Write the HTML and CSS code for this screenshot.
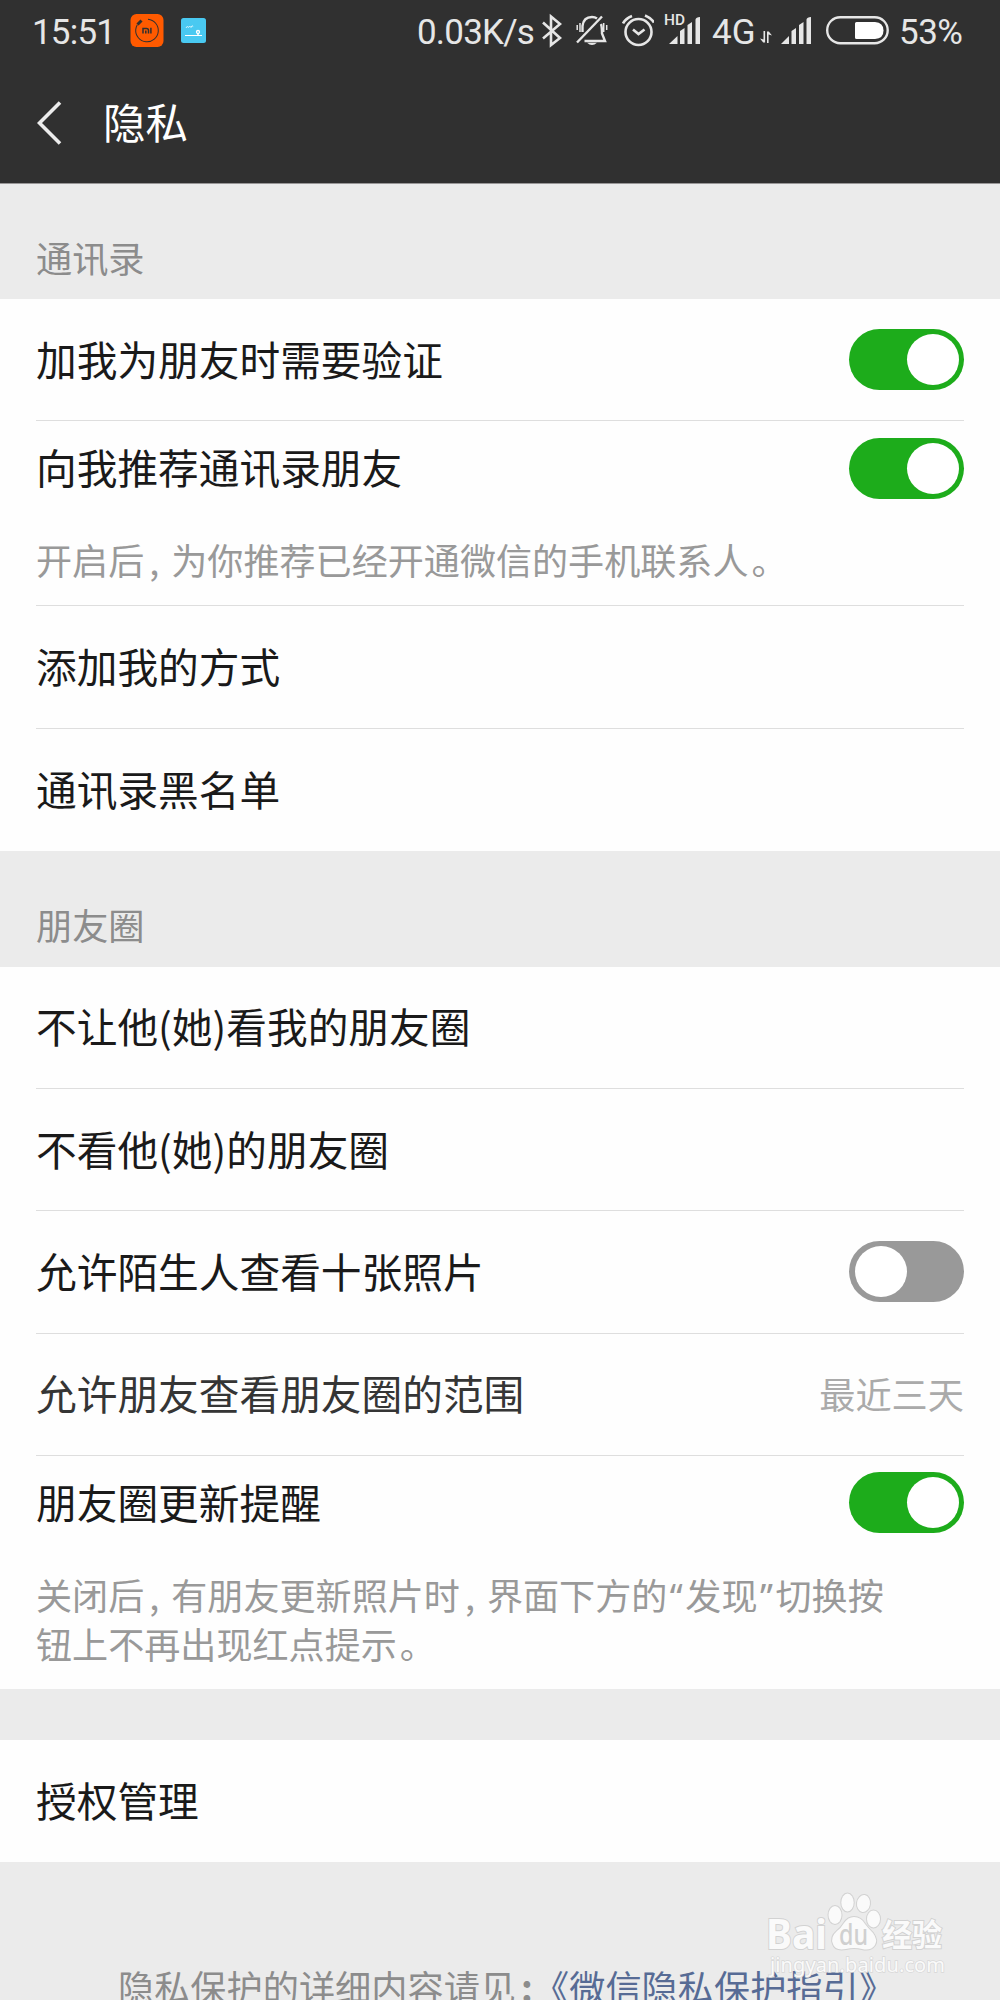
FILE: index.html
```
<!DOCTYPE html>
<html lang="zh-CN">
<head>
    <meta charset="UTF-8">
    <meta name="viewport" content="width=device-width, initial-scale=1.0">
    <title>隐私</title>
    <link rel="stylesheet" href="styles.css">
</head>
<body>
    <div class="page">
        <header class="top">
            <div class="status-bar">
                <span class="time">15:51</span>
                <svg class="icon-mi" width="34" height="64" viewBox="0 0 34 64">
                    <rect x="0.5" y="14" width="33" height="33" rx="6" fill="#ff5a00"/>
                    <circle cx="17" cy="30.5" r="11.3" fill="none" stroke="#303030" stroke-width="1" stroke-dasharray="58 13" transform="rotate(-85 17 30.5)"/>
                    <path d="M7.5 24.5l4-4" stroke="#303030" stroke-width="3"/>
                    <path d="M13 33.5v-5h3.500q2 0 2 2v3M15.800 30.5v3M20.900 27.800v5.700" fill="none" stroke="#303030" stroke-width="1.500"/>
                </svg>
                <svg class="icon-map" width="25" height="64" viewBox="0 0 25 64">
                    <rect y="18" width="25" height="25" rx="2.5" fill="#49c9f1"/>
                    <path d="M4 35.5h17" stroke="#fff" stroke-width="1"/>
                    <path d="M5 28q1-3 2.500-.5q1-3 2.500 0q1-3 2.200-1" fill="none" stroke="#d5f3fc" stroke-width="1"/>
                    <circle cx="17" cy="32" r="1.500" fill="none" stroke="#fff" stroke-width="1.300"/>
                    <path d="M17 33.500v2" stroke="#fff" stroke-width="1.500"/>
                </svg>

                <span class="speed">0.03K/s</span>
                <svg class="icon-bt" width="20" height="64" viewBox="0 0 20 64">
                    <path d="M1 22.500L18 38L9 45V16.500L18 24L1 38.500" fill="none" stroke="#e6e6e6" stroke-width="2.600"/>
                </svg>
                <svg class="icon-bell" width="32" height="64" viewBox="0 0 32 64" fill="none" stroke="#e6e6e6" stroke-width="2.400">
                    <path d="M6.500 32V26Q7.500 17 16 17Q19 17 21 18.500M25 24Q26 27 26 33.500L29 41H8.500"/>
                    <path d="M1 42.500L26 16.500"/>
                    <path d="M1.200 25v5M4 23v9M27.700 23v9M30.700 25v5" stroke-width="1.500"/>
                    <path d="M11 42.800h10q-5 4.500-10 0z" fill="#e6e6e6" stroke="none"/>
                </svg>
                <svg class="icon-alarm" width="32" height="64" viewBox="0 0 32 64" fill="none" stroke="#e6e6e6" stroke-width="2.600">
                    <circle cx="16.500" cy="32" r="13"/>
                    <path d="M11 29.500l5.500 4.500l6-4.500"/>
                    <path d="M1 23.500q2.500-5 9-7.500M32 22.500q-3-4.500-9-7"/>
                </svg>
                <svg class="icon-signal-hd" width="37" height="64" viewBox="0 0 37 64">
                    <text class="hd" x="0" y="25" textLength="21" lengthAdjust="spacingAndGlyphs">HD</text>
                    <path d="M5 44L13.500 36V44zM16 44V31L20.500 28V44zM23.500 44V25L28 22V44zM31.500 44V19.500Q32 17 36 17V44z" fill="#e6e6e6"/>
                </svg>
                <span class="network">4G</span>
                <svg class="icon-data" width="12" height="64" viewBox="0 0 12 64">
                    <path d="M0 38.500l3.200 4h1.900V31H3.500v8.500zM12 35.500l-3.200-4H7V43h1.600V34.500z" fill="#e6e6e6"/>
                </svg>
                <svg class="icon-signal" width="31" height="64" viewBox="0 0 31 64">
                    <path d="M0 44L8 36V44zM10.500 44V31L15 28V44zM18 44V25L22.500 22V44zM25.500 44V19.500Q26 17 30 17V44z" fill="#e6e6e6"/>
                </svg>
                <svg class="icon-battery" width="63" height="64" viewBox="0 0 63 64">
                    <rect x="1.200" y="17.200" width="60.500" height="26" rx="13" fill="none" stroke="#e6e6e6" stroke-width="2.400"/>
                    <path d="M30.500 22H49Q57.500 22.500 57.500 30.500T49 39H30.500Q29 39 29 37.500V23.500Q29 22 30.500 22z" fill="#fff"/>
                </svg>
                <span class="percent">53%</span>
            </div>
            <div class="title-bar">
                <svg class="back" width="25" height="44" viewBox="0 0 25 44">
                    <path d="M23 1.500L2.500 22L23 42.500" fill="none" stroke="#ececec" stroke-width="3.600"/>
                </svg>
                <h1>隐私</h1>
            </div>
        </header>

        <h2 class="group-title first">通讯录</h2>
        <div class="group">
            <div class="row">
                <span class="label">加我为朋友时需要验证</span>
                <div class="switch on"></div>
            </div>
            <div class="row with-desc">
                <div class="line">
                    <span class="label">向我推荐通讯录朋友</span>
                    <div class="switch on"></div>
                </div>
                <p class="desc">开启后<span class="comma">,</span>为你推荐已经开通微信的手机联系人<span class="stop">。</span></p>
            </div>
            <div class="row"><span class="label">添加我的方式</span></div>
            <div class="row"><span class="label">通讯录黑名单</span></div>
        </div>

        <h2 class="group-title">朋友圈</h2>
        <div class="group">
            <div class="row"><span class="label">不让他(她)看我的朋友圈</span></div>
            <div class="row"><span class="label">不看他(她)的朋友圈</span></div>
            <div class="row">
                <span class="label">允许陌生人查看十张照片</span>
                <div class="switch"></div>
            </div>
            <div class="row range">
                <span class="label">允许朋友查看朋友圈的范围</span>
                <span class="label value">最近三天</span>
            </div>
            <div class="row with-desc tall">
                <div class="line">
                    <span class="label">朋友圈更新提醒</span>
                    <div class="switch on"></div>
                </div>
                <p class="desc">关闭后<span class="comma">,</span>有朋友更新照片时<span class="comma">,</span>界面下方的<span class="quote">“</span>发现<span class="quote">”</span>切换按<br>钮上不再出现红点提示<span class="stop">。</span></p>
            </div>
        </div>

        <div class="group auth">
            <div class="row"><span class="label">授权管理</span></div>
        </div>

        <p class="footer">隐私保护的详细内容请见<span class="colon">:</span><a href="#">《微信隐私保护指引》</a></p>

        <svg class="watermark" width="190" height="95" viewBox="0 0 190 95">
            <g class="mark">
                <text class="bai" x="6" y="64" textLength="61" lengthAdjust="spacingAndGlyphs">Bai</text>
                <ellipse cx="75" cy="30" rx="6.500" ry="9"/>
                <ellipse cx="87.500" cy="17.500" rx="6.200" ry="9"/>
                <ellipse cx="103.500" cy="18.500" rx="6.500" ry="8.500" transform="rotate(8 103.500 18.500)"/>
                <ellipse cx="113.500" cy="34" rx="6.500" ry="8.500"/>
                <path d="M94 32Q101 32 105 39Q108 43 113 48Q118 55 115 60Q111 66 102 64Q94 62 86 64Q75 66 73 59Q70 52 77 46Q81 43 84 38Q88 32 94 32z"/>
                <text class="jy" x="122" y="61" textLength="60" lengthAdjust="spacingAndGlyphs">经验</text>
            </g>
            <text class="du" x="79" y="60" textLength="29" lengthAdjust="spacingAndGlyphs">du</text>
            <text class="url" x="10" y="87" textLength="175">jingyan.baidu.com</text>
        </svg>
    </div>
</body>
</html>
```
FILE: styles.css
```
* {
    box-sizing: border-box;
}
body {
    margin: 0;
    background: #ebebeb;
    font-family: "Noto Sans CJK SC", sans-serif;
    color: #1a1a1a;
}
h1, h2, p {
    margin: 0;
    font-weight: normal;
}
.page {
    position: relative;
    width: 1000px;
    height: 2000px;
    overflow: hidden;
}
.top {
    height: 184px;
    background: #303030;
    border-bottom: 1px solid #989697;
}
.status-bar {
    display: flex;
    height: 64px;
    padding-left: 32px;
    font-family: Roboto, sans-serif;
    font-size: 35px;
    line-height: 65px;
    color: #e6e6e6;
    white-space: nowrap;
}
.status-bar svg {
    flex-shrink: 0;
}
.time {
    width: 98px;
    letter-spacing: -0.8px;
}
.icon-map {
    margin-left: 17px;
}
.speed {
    width: 118px;
    margin-left: 211px;
    letter-spacing: -0.8px;
}
.icon-bt {
    margin-left: 7px;
}
.icon-bell {
    margin-left: 14px;
}
.icon-alarm {
    margin-left: 14px;
}
.icon-signal-hd {
    margin-left: 10px;
}
.hd {
    font-size: 15px;
    font-weight: 500;
    fill: #e6e6e6;
}
.network {
    width: 48px;
    margin-left: 11px;
}
.icon-data {
    margin-left: 0;
}
.icon-signal {
    margin-left: 9px;
}
.icon-battery {
    margin-left: 14px;
}
.percent {
    margin-left: 10px;
    letter-spacing: -0.5px;
}
.title-bar {
    display: flex;
    align-items: center;
    height: 117px;
    padding-left: 37px;
}
.title-bar h1 {
    margin-left: 41px;
    padding-bottom: 4px;
    font-size: 42.5px;
    line-height: 60px;
    color: #fff;
}
.group-title {
    height: 116px;
    padding: 48px 36px 0;
    font-size: 36.2px;
    line-height: 50px;
    color: #8c8c8c;
}
.group-title.first {
    height: 115px;
}
.group {
    padding: 0 36px;
    background: #fefefe;
}
.row {
    display: flex;
    align-items: center;
    justify-content: space-between;
    height: 122.25px;
    font-size: 40.7px;
    line-height: 60px;
    border-bottom: 1px solid #dedede;
}
.row:last-child {
    border-bottom: none;
}
.row.with-desc {
    display: block;
    height: 185px;
}
.row.with-desc.tall {
    height: 233px;
}
.line {
    display: flex;
    align-items: center;
    justify-content: space-between;
    height: 94px;
}
.label {
    padding-bottom: 2px;
}
.range {
    color: #353535;
}
.value {
    font-size: 36.2px;
    color: #aaa;
}
.desc {
    padding-top: 21px;
    font-size: 36.1px;
    line-height: 47.5px;
    color: #999;
    white-space: nowrap;
}
.comma,
.quote,
.colon {
    display: inline-block;
    width: 27px;
    padding-left: 5px;
}
.quote {
    width: 18px;
    padding-left: 0;
    text-align: center;
    font-family: "Noto Sans", sans-serif;
}
.colon {
    width: 17px;
    font-weight: bold;
}
.stop {
    margin-left: 3px;
}
.switch {
    width: 115px;
    height: 61px;
    padding: 5px 5px 5px 6px;
    border-radius: 31px;
    background: #999;
}
.switch::before {
    content: "";
    display: block;
    width: 52px;
    height: 51px;
    border-radius: 50%;
    background: #fff;
}
.switch.on {
    background: #1dac1b;
}
.switch.on::before {
    margin-left: 52px;
}
.auth {
    margin-top: 51px;
}
.footer {
    padding: 99px 0 0 118px;
    font-size: 36.2px;
    line-height: 50px;
    color: #8c8c8c;
    white-space: nowrap;
}
.footer a {
    color: #576b95;
    text-decoration: none;
}
.watermark {
    position: absolute;
    left: 760px;
    top: 1885px;
    font-family: "Noto Sans", sans-serif;
}
.mark {
    fill: #fafafa;
    stroke: #d2d2d2;
    stroke-width: 2px;
    paint-order: stroke;
}
.bai {
    font-size: 42px;
    font-weight: bold;
}
.jy {
    font-family: "Noto Sans CJK SC", sans-serif;
    font-size: 31px;
    font-weight: bold;
}
.du {
    font-size: 29px;
    font-weight: 500;
    fill: #d0d0d0;
}
.url {
    font-size: 20px;
    fill: #fafafa;
    stroke: #d8d8d8;
    stroke-width: 1.5px;
    paint-order: stroke;
}
```
